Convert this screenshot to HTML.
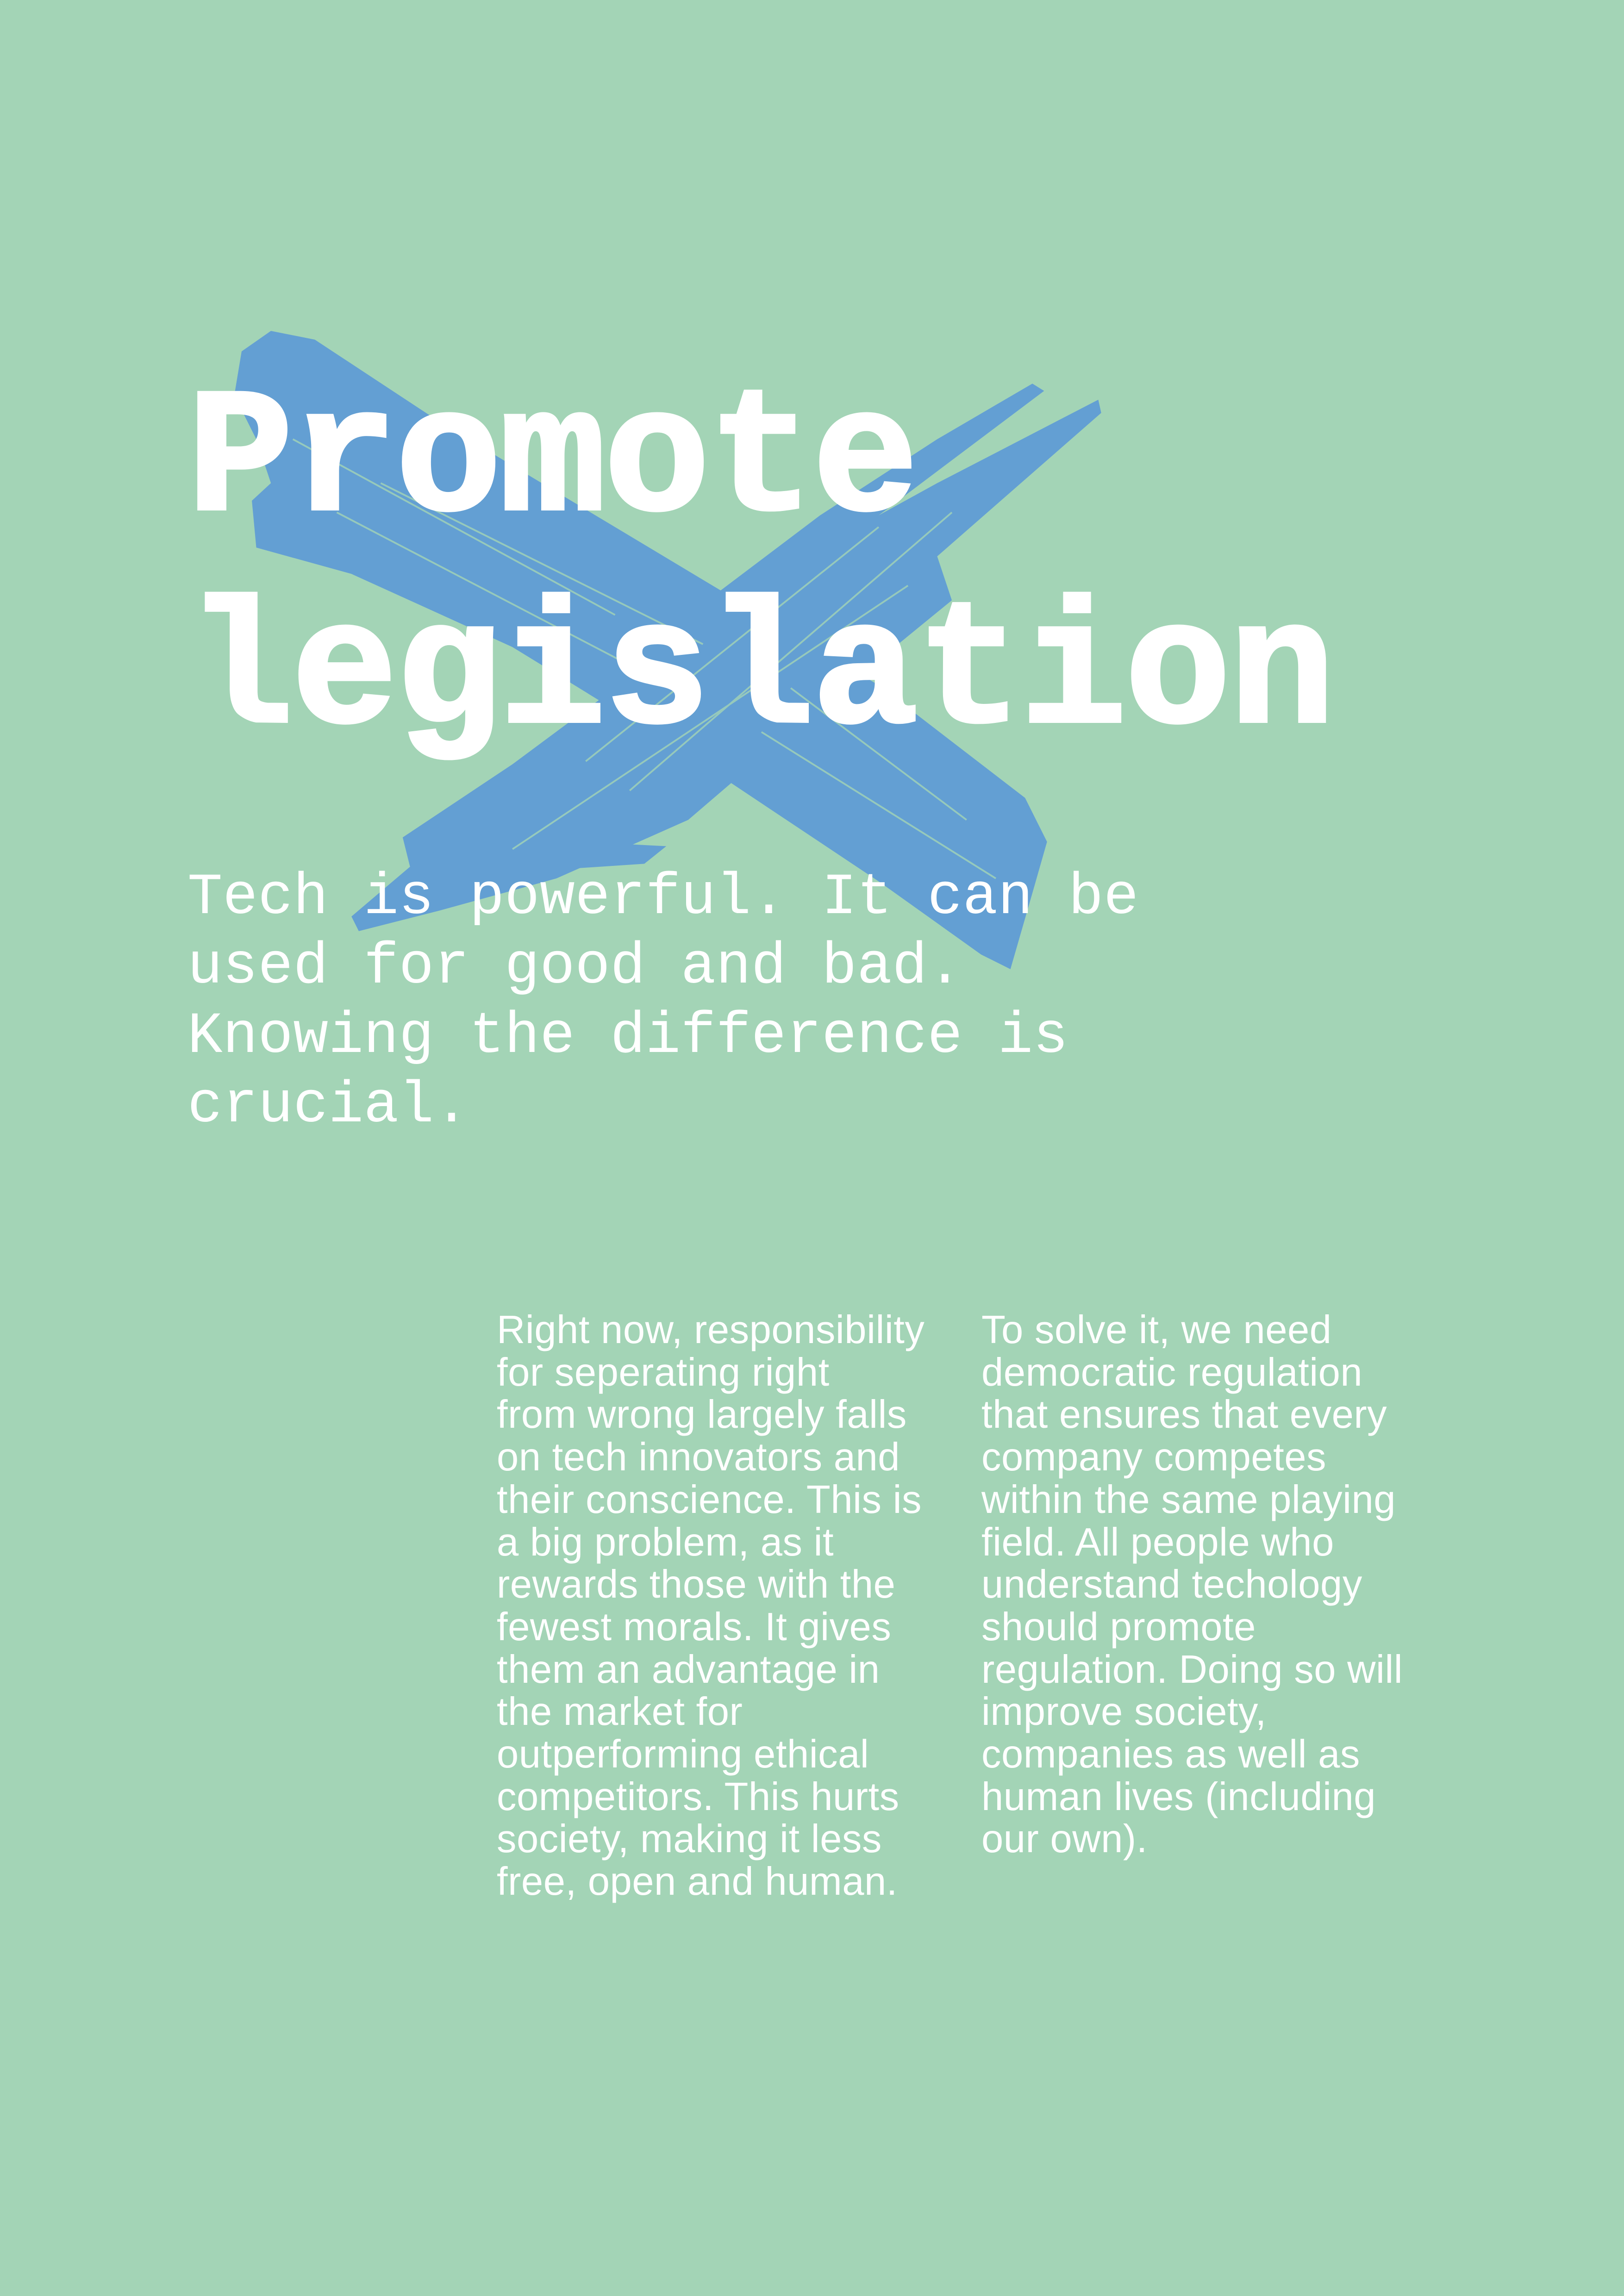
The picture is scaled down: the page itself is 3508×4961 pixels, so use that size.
<!DOCTYPE html>
<html><head><meta charset="utf-8"><style>
html,body{margin:0;padding:0}
body{width:3508px;height:4961px;background:#a3d4b6;position:relative;overflow:hidden;font-family:"Liberation Sans",sans-serif;color:#fff}
svg{position:absolute;left:0;top:0}
.t{position:absolute;left:405px;font-family:"Liberation Mono",monospace;font-weight:bold;font-size:380px;line-height:459px;top:770px;white-space:nowrap;letter-spacing:-3px;-webkit-text-stroke:8px #fff}
.s{position:absolute;left:405px;top:1865px;font-family:"Liberation Mono",monospace;font-size:126px;line-height:150px;white-space:nowrap;letter-spacing:0.5px}
.c{position:absolute;top:2828px;font-size:85px;line-height:91.7px;white-space:nowrap;letter-spacing:0.5px}
</style></head><body>
<svg width="3508" height="4961" viewBox="0 0 1109 1568.3">
<g fill="#639fd3">
<path d="M165,240 L185,226 L215,232 L300,288 L450,378 L600,468 L700,545 L715,575 L705,610 L690,662 L670,652 L600,602 L480,522 L350,442 L240,392 L175,374 L172,342 L185,330 L175,300 L160,270 Z"/>
<path d="M705,262 L713,267 L600,352 L640,330 L750,273 L752,282 L640,380 L650,410 L540,500 L470,560 L380,600 L300,622 L245,636 L240,626 L280,592 L275,572 L350,522 L420,470 L470,420 L560,352 L640,300 Z"/>
<path d="M300,570 L455,578 L440,590 L290,600 Z"/>
</g>
<g stroke="#a3d4b6" stroke-width="1.2" fill="none" opacity="0.8">
<path d="M200,300 L420,420"/><path d="M230,350 L460,470"/><path d="M260,330 L480,440"/><path d="M520,500 L680,600"/><path d="M540,470 L660,560"/>
<path d="M600,360 L400,520"/><path d="M650,350 L430,540"/><path d="M620,400 L350,580"/>
</g>
</svg>
<div class="t">Promote<br>legislation</div>
<div class="s">Tech is powerful. It can be<br>used for good and bad.<br>Knowing the difference is<br>crucial.</div>
<div class="c" style="left:1073px">Right now, responsibility<br>for seperating right<br>from wrong largely falls<br>on tech innovators and<br>their conscience. This is<br>a big problem, as it<br>rewards those with the<br>fewest morals. It gives<br>them an advantage in<br>the market for<br>outperforming ethical<br>competitors. This hurts<br>society, making it less<br>free, open and human.</div>
<div class="c" style="left:2120px">To solve it, we need<br>democratic regulation<br>that ensures that every<br>company competes<br>within the same playing<br>field. All people who<br>understand techology<br>should promote<br>regulation. Doing so will<br>improve society,<br>companies as well as<br>human lives (including<br>our own).</div>
</body></html>
